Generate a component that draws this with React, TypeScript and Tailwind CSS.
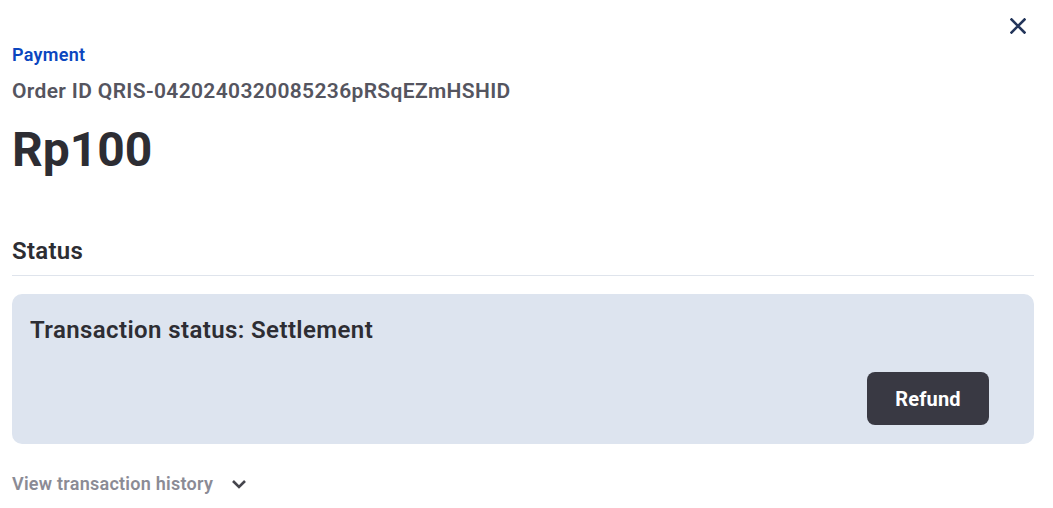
import React from 'react';

const XIcon = () => (
  <svg width="16" height="16" viewBox="0 0 16 16" fill="none">
    <path d="M1.5 1.5L14.5 14.5M14.5 1.5L1.5 14.5" stroke="#23355a" strokeWidth="2.6" strokeLinecap="square" />
  </svg>
);

const Chevron = () => (
  <svg width="16" height="12" viewBox="0 0 16 12" fill="none">
    <path d="M2 3L8 9L14 3" stroke="#45454d" strokeWidth="2.6" />
  </svg>
);

export default function App() {
  return (
    <div
      className="relative w-[1053px] h-[508px] bg-white px-[12px] pt-[43px] text-[#2d2d33]"
      style={{ fontFamily: 'Roboto, "Liberation Sans", sans-serif' }}
    >
      <button className="absolute top-[18px] right-[27px] p-0">
        <XIcon />
      </button>

      <div className="text-[18px] leading-[24px] font-semibold tracking-[0.3px] text-[#0b46bf]">Payment</div>
      <div className="mt-[10px] text-[21px] leading-[28px] font-semibold tracking-[0.35px] text-[#55555f]">
        Order ID QRIS-0420240320085236pRSqEZmHSHID
      </div>
      <div className="mt-[17px] text-[48px] leading-[56px] font-bold text-[#2d2d33]">Rp100</div>

      <div className="mt-[57px] pb-[8px] border-b border-[#dfe4ec] w-[1022px]">
        <div className="text-[24px] leading-[32px] font-semibold tracking-[0.3px]">Status</div>
      </div>

      <div className="mt-[18px] w-[1022px] h-[150px] rounded-[10px] bg-[#dde4ef] pl-[18px] pr-[45px] pt-[20px] flex flex-col">
        <div className="text-[24px] leading-[32px] font-semibold tracking-[0.4px] text-[#2d2d33]">
          Transaction status: Settlement
        </div>
        <div className="mt-[26px] flex justify-end">
          <button className="w-[122px] h-[53px] rounded-[8px] bg-[#393943] text-white text-[20px] font-bold tracking-[0.2px]">
            Refund
          </button>
        </div>
      </div>

      <div className="mt-[28px] flex items-center gap-[18px]">
        <span className="text-[18px] leading-[24px] font-semibold tracking-[0.25px] text-[#8b8b95]">
          View transaction history
        </span>
        <Chevron />
      </div>
    </div>
  );
}
